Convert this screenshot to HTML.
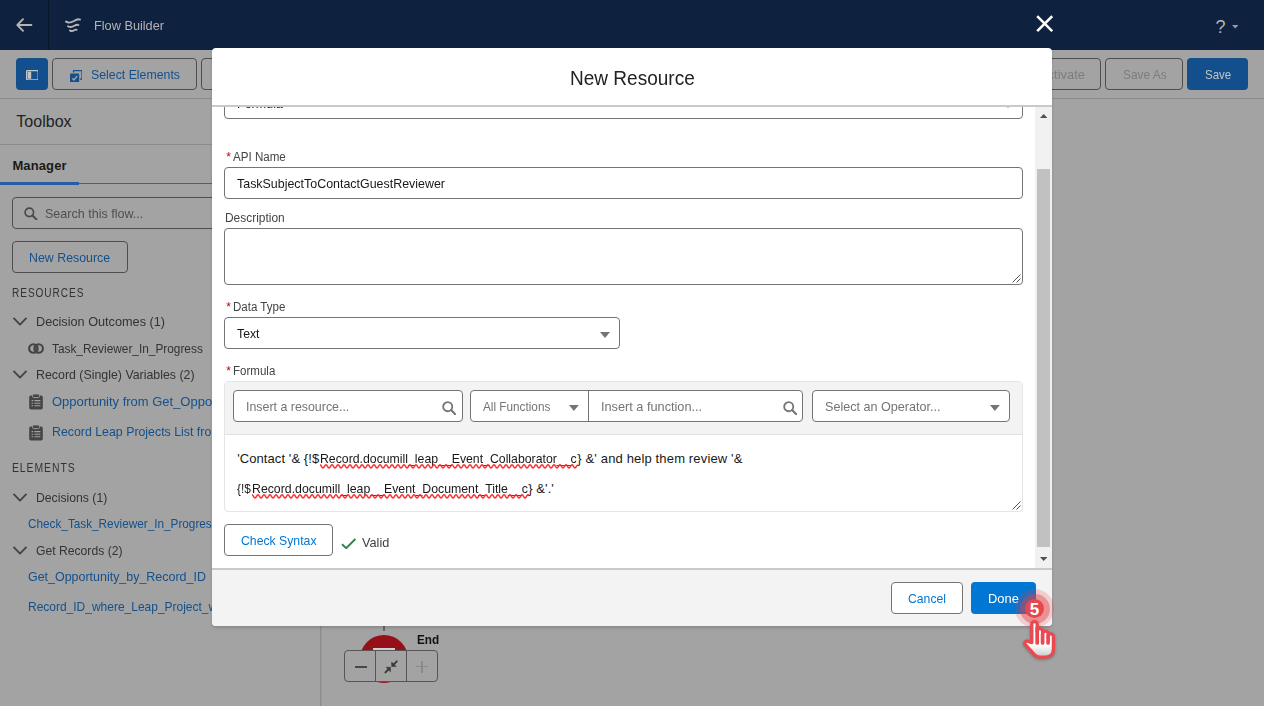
<!DOCTYPE html>
<html><head><meta charset="utf-8"><title>Flow Builder</title>
<style>
html,body{margin:0;padding:0}
body{width:1264px;height:706px;overflow:hidden;position:relative;background:#a3a3a3;font-family:"Liberation Sans",sans-serif;}
.b{position:absolute;box-sizing:border-box;display:block}
.t{position:absolute;white-space:nowrap;line-height:1;font-family:"Liberation Sans",sans-serif;transform-origin:0 0;}
.clip{position:absolute;overflow:hidden}
</style></head><body>

<div class="b" style="left:0px;top:0px;width:1264px;height:50px;background:#0e2240"></div>
<div class="b" style="left:48px;top:0px;width:1px;height:50px;background:#08162b"></div>
<svg class="b" style="left:16px;top:18px;" width="17" height="14" viewBox="0 0 17 14"><path d="M15.4 7H1.6M7 1.2L1.4 7L7 12.8" fill="none" stroke="#b4b4b4" stroke-width="1.9" stroke-linecap="round" stroke-linejoin="round"/></svg>
<svg class="b" style="left:65px;top:16.6px;" width="16" height="16.4" viewBox="0 0 16 16.4"><g fill="none" stroke="#b4b4b4" stroke-width="1.9" stroke-linecap="round"><path d="M1 4.6 C4 6.6 6.4 5.6 9 4 C11.4 2.4 13 1.6 15 2.6"/><path d="M3 9.2 C5.4 10.8 7.4 10 9.4 8.8 C11 7.8 12.2 7.4 13.4 8"/><path d="M5 13.4 C6.6 14.6 8 14 9.2 13.2 C10.2 12.6 10.8 12.4 11.6 12.8"/></g></svg>
<svg class="b" style="left:1035.8px;top:15.3px;" width="17.4" height="17.4" viewBox="0 0 17.4 17.4"><path d="M1.2 1.2L16.2 16.2M16.2 1.2L1.2 16.2" stroke="#ffffff" stroke-width="2.5" stroke-linecap="butt"/></svg>
<svg class="b" style="left:1232px;top:25.2px;" width="6.4" height="3.4" viewBox="0 0 6.4 3.4"><path d="M0 0H6.4L3.2 3.4Z" fill="#9a9a9a"/></svg>
<div class="b" style="left:0px;top:98px;width:1264px;height:1px;background:#8b8b8b"></div>
<div class="b" style="left:16px;top:58px;width:32px;height:32px;background:#134f8c;border-radius:4px"></div>
<svg class="b" style="left:25.6px;top:69.6px;" width="12.8" height="10.4" viewBox="0 0 12.8 10.4"><rect x="0.6" y="0.6" width="11.6" height="9.2" rx="0.8" fill="none" stroke="#c4c4c4" stroke-width="1.2"/><rect x="1.6" y="1.6" width="3.6" height="7.2" fill="#c4c4c4"/></svg>
<div class="b" style="left:52px;top:58px;width:145px;height:32px;border:1px solid #4e4e4e;border-radius:4px"></div>
<svg class="b" style="left:69.6px;top:69.6px;" width="12.6" height="12.6" viewBox="0 0 12.6 12.6"><path d="M3.4 2.6V1.2Q3.4 0.6 4 0.6H11.4Q12 0.6 12 1.2V8.6Q12 9.2 11.4 9.2H10" fill="none" stroke="#14508b" stroke-width="1.2"/><rect x="0" y="3.4" width="9.2" height="9.2" rx="1" fill="#14508b"/><path d="M2.2 8.2L4 10L7.2 6" fill="none" stroke="#a3a3a3" stroke-width="1.3"/></svg>
<div class="b" style="left:201px;top:58px;width:60px;height:32px;border:1px solid #4e4e4e;border-radius:4px"></div>
<div class="b" style="left:1022px;top:58px;width:79px;height:32px;border:1px solid #4e4e4e;border-radius:4px"></div>
<div class="b" style="left:1105px;top:58px;width:78px;height:32px;border:1px solid #4e4e4e;border-radius:4px"></div>
<div class="b" style="left:1187px;top:58px;width:61px;height:32px;background:#134f8c;border-radius:4px"></div>
<div class="b" style="left:320px;top:99px;width:1px;height:607px;background:#8b8b8b"></div>
<div class="b" style="left:321px;top:99px;width:1px;height:607px;background:#9b9b9b"></div>
<div class="b" style="left:0px;top:144px;width:320px;height:1px;background:#8b8b8b"></div>
<div class="b" style="left:0px;top:183px;width:320px;height:1px;background:#5e5e5e"></div>
<div class="b" style="left:0px;top:181.6px;width:79px;height:3px;background:#2a5ba3"></div>
<div class="b" style="left:12px;top:197px;width:300px;height:32px;border:1px solid #4e4e4e;border-radius:4px"></div>
<svg class="b" style="left:24.2px;top:206.6px;" width="13.4" height="13.4" viewBox="0 0 13.6 13.6"><circle cx="5.4" cy="5.4" r="4.3" fill="none" stroke="#4a4a4a" stroke-width="1.7"/><path d="M8.6 8.6 L12.6 12.6" stroke="#4a4a4a" stroke-width="2" stroke-linecap="round"/></svg>
<div class="b" style="left:12px;top:241px;width:116px;height:32px;border:1px solid #4e4e4e;border-radius:4px"></div>
<svg class="b" style="left:13.2px;top:317.4px;" width="14" height="9" viewBox="0 0 14 9"><path d="M1 1.4 L7 7.6 L13 1.4" fill="none" stroke="#444" stroke-width="1.9" stroke-linecap="round" stroke-linejoin="round"/></svg>
<svg class="b" style="left:28px;top:343.4px;" width="16" height="11" viewBox="0 0 16 11"><circle cx="5.4" cy="5.5" r="4.3" fill="none" stroke="#444" stroke-width="2.1"/><circle cx="10.6" cy="5.5" r="4.3" fill="none" stroke="#444" stroke-width="2.1"/><path d="M8 1.9 A4.5 4.5 0 0 1 8 9.1 A4.5 4.5 0 0 1 8 1.9Z" fill="#444" opacity="0.75"/></svg>
<svg class="b" style="left:13.2px;top:370.4px;" width="14" height="9" viewBox="0 0 14 9"><path d="M1 1.4 L7 7.6 L13 1.4" fill="none" stroke="#444" stroke-width="1.9" stroke-linecap="round" stroke-linejoin="round"/></svg>
<svg class="b" style="left:29px;top:394.4px;" width="14" height="15.6" viewBox="0 0 14 15.6"><rect x="0.2" y="1.6" width="13.6" height="13.8" rx="1.6" fill="#444"/><rect x="3.6" y="0" width="6.8" height="3.6" rx="1" fill="#444" stroke="#a3a3a3" stroke-width="0.9"/><g stroke="#a3a3a3" stroke-width="1.1"><path d="M2.6 6.6h1.6M5.4 6.6h6M2.6 9.2h1.6M5.4 9.2h6M2.6 11.8h1.6M5.4 11.8h6"/></g></svg>
<svg class="b" style="left:29px;top:425.4px;" width="14" height="15.6" viewBox="0 0 14 15.6"><rect x="0.2" y="1.6" width="13.6" height="13.8" rx="1.6" fill="#444"/><rect x="3.6" y="0" width="6.8" height="3.6" rx="1" fill="#444" stroke="#a3a3a3" stroke-width="0.9"/><g stroke="#a3a3a3" stroke-width="1.1"><path d="M2.6 6.6h1.6M5.4 6.6h6M2.6 9.2h1.6M5.4 9.2h6M2.6 11.8h1.6M5.4 11.8h6"/></g></svg>
<svg class="b" style="left:13.2px;top:493.4px;" width="14" height="9" viewBox="0 0 14 9"><path d="M1 1.4 L7 7.6 L13 1.4" fill="none" stroke="#444" stroke-width="1.9" stroke-linecap="round" stroke-linejoin="round"/></svg>
<svg class="b" style="left:13.2px;top:546.4px;" width="14" height="9" viewBox="0 0 14 9"><path d="M1 1.4 L7 7.6 L13 1.4" fill="none" stroke="#444" stroke-width="1.9" stroke-linecap="round" stroke-linejoin="round"/></svg>
<div class="b" style="left:383px;top:626px;width:2px;height:5px;background:#666"></div>
<div class="b" style="left:360.2px;top:635px;width:48px;height:48px;background:#96101a;border-radius:50%"></div>
<div class="b" style="left:373px;top:648px;width:22.4px;height:8px;background:#cfcfcf"></div>
<div class="b" style="left:344px;top:650px;width:94px;height:32px;background:#a3a3a3;border:1px solid #555;border-radius:4px"></div>
<div class="b" style="left:375px;top:650px;width:1px;height:32px;background:#555"></div>
<div class="b" style="left:406px;top:650px;width:1px;height:32px;background:#555"></div>
<div class="b" style="left:354.6px;top:666px;width:12.8px;height:1.8px;background:#484848"></div>
<svg class="b" style="left:383px;top:659px;" width="16" height="16" viewBox="383 659 16 16"><g fill="#3c3c3c" stroke="#3c3c3c"><path d="M391.7 666.5V662.1L396.1 666.5Z" stroke-width="0.6" stroke-linejoin="round"/><path d="M393.6 664.6L396.8 661.4" stroke-width="2" stroke-linecap="round" fill="none"/><path d="M390.5 667.3H386.1L390.5 671.7Z" stroke-width="0.6" stroke-linejoin="round"/><path d="M388.6 669.2L385.4 672.4" stroke-width="2" stroke-linecap="round" fill="none"/></g></svg>
<div class="b" style="left:415.8px;top:665.7px;width:12px;height:1.8px;background:#8a8a8a"></div>
<div class="b" style="left:420.9px;top:660.6px;width:1.8px;height:12px;background:#8a8a8a"></div>
<div class="t" id="flow" style="left:93.60px;top:19.00px;font-size:13px;color:#b4b4b4;transform:scaleX(0.9786);">Flow Builder</div>
<div class="t" id="help" style="left:1215.40px;top:18.06px;font-size:18px;color:#b4b4b4;">?</div>
<div class="t" id="selel" style="left:91.30px;top:67.80px;font-size:13px;color:#14508b;transform:scaleX(0.9474);">Select Elements</div>
<div class="t" id="activate" style="left:1039.10px;top:67.80px;font-size:13px;color:#7d7d7d;transform:scaleX(0.9946);">Activate</div>
<div class="t" id="saveas" style="left:1122.70px;top:67.80px;font-size:13px;color:#7d7d7d;transform:scaleX(0.9161);">Save As</div>
<div class="t" id="save" style="left:1204.80px;top:67.80px;font-size:13px;color:#c4c4c4;transform:scaleX(0.8839);">Save</div>
<div class="t" id="toolbox" style="left:16.30px;top:113.76px;font-size:16px;color:#222222;letter-spacing:0.024px;">Toolbox</div>
<div class="t" id="manager" style="left:12.40px;top:159.00px;font-size:13px;color:#1a1a1a;font-weight:700;letter-spacing:0.122px;">Manager</div>
<div class="t" id="search" style="left:45.00px;top:206.60px;font-size:13px;color:#4f4f4f;transform:scaleX(0.9648);">Search this flow...</div>
<div class="t" id="newres" style="left:29.30px;top:250.80px;font-size:13px;color:#14508b;transform:scaleX(0.9523);">New Resource</div>
<div class="t" id="resources" style="left:12.40px;top:286.84px;font-size:12px;color:#333333;letter-spacing:1.100px;transform:scaleX(0.8418);">RESOURCES</div>
<div class="t" id="decout" style="left:36.20px;top:315.10px;font-size:13px;color:#333333;transform:scaleX(0.9757);">Decision Outcomes (1)</div>
<div class="t" id="taskrev" style="left:52.40px;top:341.80px;font-size:13px;color:#333333;transform:scaleX(0.9114);">Task_Reviewer_In_Progress</div>
<div class="t" id="recvar" style="left:36.00px;top:367.80px;font-size:13px;color:#333333;transform:scaleX(0.9516);">Record (Single) Variables (2)</div>
<div class="t" id="elements" style="left:12.40px;top:461.84px;font-size:12px;color:#333333;letter-spacing:1.100px;transform:scaleX(0.8648);">ELEMENTS</div>
<div class="t" id="decisions" style="left:35.90px;top:491.00px;font-size:13px;color:#333333;transform:scaleX(0.9399);">Decisions (1)</div>
<div class="t" id="getrec" style="left:36.10px;top:543.90px;font-size:13px;color:#333333;transform:scaleX(0.9353);">Get Records (2)</div>
<div class="t" id="getopp" style="left:28.10px;top:570.00px;font-size:13px;color:#14508b;transform:scaleX(0.9579);">Get_Opportunity_by_Record_ID</div>
<div class="t" id="end" style="left:416.80px;top:632.60px;font-size:13px;color:#111111;font-weight:700;transform:scaleX(0.9038);">End</div>
<div class="clip" style="left:0;top:380px;width:320px;height:250px">
<div class="t" id="oppfrom" style="left:52.40px;top:14.80px;font-size:13px;color:#14508b;transform:scaleX(0.9980);">Opportunity from Get_Opportunity_by_Record_ID</div>
<div class="t" id="recleap" style="left:52.40px;top:45.10px;font-size:13px;color:#14508b;transform:scaleX(0.9500);">Record Leap Projects List from Record_ID_where</div>
<div class="t" id="checktask" style="left:28.10px;top:136.90px;font-size:13px;color:#14508b;transform:scaleX(0.9050);">Check_Task_Reviewer_In_Progress</div>
<div class="t" id="recid" style="left:28.10px;top:220.00px;font-size:13px;color:#14508b;transform:scaleX(0.9216);">Record_ID_where_Leap_Project_was_shared</div>
</div>
<div class="b" style="left:212px;top:48px;width:840px;height:577.5px;background:#ffffff;border-radius:4px;box-shadow:0 2px 3px rgba(0,0,0,0.16)"></div>
<div class="clip" style="left:212px;top:107px;width:823px;height:461px">
<div class="b" style="left:12px;top:-20px;width:799px;height:32px;border:1px solid #747474;border-radius:4px;background:#fff"></div>
<svg class="b" style="left:791px;top:-5px;" width="10" height="6" viewBox="0 0 10 6"><path d="M0 0H10L5.0 6Z" fill="#747474"/></svg>
</div>
<div class="b" style="left:212px;top:105px;width:840px;height:2px;background:#c9c9c9"></div>
<div class="b" style="left:212px;top:568px;width:840px;height:57.5px;background:#f3f3f3;border-top:2px solid #c9c9c9;border-radius:0 0 4px 4px"></div>
<div class="b" style="left:224px;top:167px;width:799px;height:32px;border:1px solid #747474;border-radius:4px;background:#fff"></div>
<div class="b" style="left:224px;top:228px;width:799px;height:57px;border:1px solid #747474;border-radius:4px;background:#fff"></div>
<div class="b" style="left:224px;top:317px;width:396px;height:32px;border:1px solid #747474;border-radius:4px;background:#fff"></div>
<svg class="b" style="left:600px;top:332px;" width="10" height="6" viewBox="0 0 10 6"><path d="M0 0H10L5.0 6Z" fill="#747474"/></svg>
<div class="b" style="left:224px;top:381px;width:799px;height:131px;border:1px solid #e5e5e5;border-radius:4px;background:#fff"></div>
<div class="b" style="left:225px;top:382px;width:797px;height:52px;background:#f3f3f3;border-radius:3px 3px 0 0"></div>
<div class="b" style="left:225px;top:434px;width:797px;height:1px;background:#e0e0e0"></div>
<div class="b" style="left:233px;top:390px;width:230px;height:32px;border:1px solid #747474;border-radius:4px;background:#fff"></div>
<svg class="b" style="left:441.6px;top:400.8px;" width="14.4" height="14.4" viewBox="0 0 13.6 13.6"><circle cx="5.4" cy="5.4" r="4.3" fill="none" stroke="#747474" stroke-width="1.7"/><path d="M8.6 8.6 L12.6 12.6" stroke="#747474" stroke-width="2" stroke-linecap="round"/></svg>
<div class="b" style="left:470px;top:390px;width:333px;height:32px;border:1px solid #747474;border-radius:4px;background:#fff"></div>
<div class="b" style="left:588px;top:391px;width:1px;height:30px;background:#747474"></div>
<svg class="b" style="left:569.4px;top:404.8px;" width="9.8" height="6" viewBox="0 0 9.8 6"><path d="M0 0H9.8L4.9 6Z" fill="#747474"/></svg>
<svg class="b" style="left:782.6px;top:400.8px;" width="14.4" height="14.4" viewBox="0 0 13.6 13.6"><circle cx="5.4" cy="5.4" r="4.3" fill="none" stroke="#747474" stroke-width="1.7"/><path d="M8.6 8.6 L12.6 12.6" stroke="#747474" stroke-width="2" stroke-linecap="round"/></svg>
<div class="b" style="left:812px;top:390px;width:198px;height:32px;border:1px solid #747474;border-radius:4px;background:#fff"></div>
<svg class="b" style="left:990.2px;top:404.8px;" width="9.8" height="6" viewBox="0 0 9.8 6"><path d="M0 0H9.8L4.9 6Z" fill="#747474"/></svg>
<svg class="b" style="left:1012.4px;top:274.4px;" width="9" height="9" viewBox="0 0 9 9"><path d="M8.5 0.5L0.5 8.5M8.5 4.5L4.5 8.5" stroke="#555" stroke-width="1"/></svg>
<svg class="b" style="left:1012.4px;top:501.0px;" width="9" height="9" viewBox="0 0 9 9"><path d="M8.5 0.5L0.5 8.5M8.5 4.5L4.5 8.5" stroke="#555" stroke-width="1"/></svg>
<div class="b" style="left:224px;top:524px;width:109px;height:32px;border:1px solid #747474;border-radius:4px;background:#fff"></div>
<svg class="b" style="left:341.4px;top:537.8px;" width="15.4" height="11.6" viewBox="0 0 15.4 11.6"><path d="M1 6.2L5.2 10.2L14.4 1" fill="none" stroke="#2e844a" stroke-width="1.9"/></svg>
<div class="b" style="left:891px;top:582px;width:72px;height:32px;border:1px solid #747474;border-radius:4px;background:#fff"></div>
<div class="b" style="left:971px;top:582px;width:65px;height:32px;background:#0176d3;border-radius:4px"></div>
<div class="b" style="left:1035px;top:107px;width:17px;height:461px;background:#f1f1f1"></div>
<div class="b" style="left:1037px;top:169px;width:13px;height:378px;background:#c1c1c1"></div>
<svg class="b" style="left:1040px;top:114.4px;" width="7.4" height="4" viewBox="0 0 7.4 4"><path d="M0 4H7.4L3.7 0Z" fill="#505050"/></svg>
<svg class="b" style="left:1040px;top:557px;" width="7.4" height="4" viewBox="0 0 7.4 4"><path d="M0 0H7.4L3.7 4Z" fill="#505050"/></svg>
<div class="t" id="title" style="left:569.90px;top:67.97px;font-size:20px;color:#222222;transform:scaleX(0.9514);">New Resource</div>
<div class="t" id="apistar" style="left:226.20px;top:151.24px;font-size:12px;color:#ba0517;">*</div>
<div class="t" id="apiname" style="left:233.00px;top:151.04px;font-size:12px;color:#444444;transform:scaleX(0.9655);">API Name</div>
<div class="t" id="apival" style="left:237.20px;top:177.20px;font-size:13px;color:#181818;transform:scaleX(0.9563);">TaskSubjectToContactGuestReviewer</div>
<div class="t" id="desc" style="left:224.50px;top:212.04px;font-size:12px;color:#444444;transform:scaleX(0.9945);">Description</div>
<div class="t" id="dtstar" style="left:226.20px;top:301.04px;font-size:12px;color:#ba0517;">*</div>
<div class="t" id="datatype" style="left:233.40px;top:300.84px;font-size:12px;color:#444444;transform:scaleX(0.9617);">Data Type</div>
<div class="t" id="textval" style="left:237.20px;top:327.00px;font-size:13px;color:#181818;transform:scaleX(0.9436);">Text</div>
<div class="t" id="fstar" style="left:226.20px;top:365.04px;font-size:12px;color:#ba0517;">*</div>
<div class="t" id="formula" style="left:233.40px;top:364.84px;font-size:12px;color:#444444;transform:scaleX(0.9610);">Formula</div>
<div class="t" id="insres" style="left:246.10px;top:400.10px;font-size:13px;color:#747474;transform:scaleX(0.9530);">Insert a resource...</div>
<div class="t" id="allfn" style="left:482.90px;top:400.94px;font-size:12px;color:#747474;transform:scaleX(0.9796);">All Functions</div>
<div class="t" id="insfn" style="left:601.30px;top:400.10px;font-size:13px;color:#747474;transform:scaleX(0.9783);">Insert a function...</div>
<div class="t" id="selop" style="left:824.80px;top:400.10px;font-size:13px;color:#747474;transform:scaleX(0.9687);">Select an Operator...</div>
<div class="t" id="check" style="left:241.00px;top:534.00px;font-size:13px;color:#0176d3;transform:scaleX(0.9414);">Check Syntax</div>
<div class="t" id="valid" style="left:361.50px;top:536.00px;font-size:13px;color:#3e3e3c;transform:scaleX(0.9766);">Valid</div>
<div class="t" id="cancel" style="left:908.00px;top:592.00px;font-size:13px;color:#0176d3;transform:scaleX(0.9390);">Cancel</div>
<div class="t" id="done" style="left:988.30px;top:591.60px;font-size:13px;color:#ffffff;transform:scaleX(0.9943);">Done</div>
<div class="clip" style="left:212px;top:107px;width:823px;height:20px">
<div class="t" id="formulaclip" style="left:25.30px;top:-9.90px;font-size:13px;color:#181818;transform:scaleX(0.9625);">Formula</div>
</div>
<div class="t" id="f1a" style="left:237.20px;top:451.80px;font-size:13px;color:#181818;letter-spacing:0.083px;">'Contact '&amp; {!$</div>
<div class="t" id="f1b" style="left:319.90px;top:451.80px;font-size:13px;color:#181818;transform:scaleX(0.9444);">Record.documill_leap__Event_Collaborator__c</div>
<div class="t" id="f1c" style="left:577.30px;top:451.80px;font-size:13px;color:#181818;letter-spacing:0.150px;">} &amp;' and help them review '&amp;</div>
<div class="t" id="f2a" style="left:237.20px;top:482.00px;font-size:13px;color:#181818;transform:scaleX(0.9086);">{!$</div>
<div class="t" id="f2b" style="left:251.70px;top:482.00px;font-size:13px;color:#181818;transform:scaleX(0.9462);">Record.documill_leap__Event_Document_Title__c</div>
<div class="t" id="f2c" style="left:528.30px;top:482.00px;font-size:13px;color:#181818;letter-spacing:0.059px;">} &amp;'.'</div>
<svg class="b" style="left:319.6px;top:464.2px;" width="259" height="5" viewBox="0 0 259 5"><path d="M0 0.8 C1.30 0.8 1.70 4.00 3.00 4.00 C4.30 4.0 4.70 0.80 6.00 0.80 C7.30 0.8 7.70 4.00 9.00 4.00 C10.30 4.0 10.70 0.80 12.00 0.80 C13.30 0.8 13.70 4.00 15.00 4.00 C16.30 4.0 16.70 0.80 18.00 0.80 C19.30 0.8 19.70 4.00 21.00 4.00 C22.30 4.0 22.70 0.80 24.00 0.80 C25.30 0.8 25.70 4.00 27.00 4.00 C28.30 4.0 28.70 0.80 30.00 0.80 C31.30 0.8 31.70 4.00 33.00 4.00 C34.30 4.0 34.70 0.80 36.00 0.80 C37.30 0.8 37.70 4.00 39.00 4.00 C40.30 4.0 40.70 0.80 42.00 0.80 C43.30 0.8 43.70 4.00 45.00 4.00 C46.30 4.0 46.70 0.80 48.00 0.80 C49.30 0.8 49.70 4.00 51.00 4.00 C52.30 4.0 52.70 0.80 54.00 0.80 C55.30 0.8 55.70 4.00 57.00 4.00 C58.30 4.0 58.70 0.80 60.00 0.80 C61.30 0.8 61.70 4.00 63.00 4.00 C64.30 4.0 64.70 0.80 66.00 0.80 C67.30 0.8 67.70 4.00 69.00 4.00 C70.30 4.0 70.70 0.80 72.00 0.80 C73.30 0.8 73.70 4.00 75.00 4.00 C76.30 4.0 76.70 0.80 78.00 0.80 C79.30 0.8 79.70 4.00 81.00 4.00 C82.30 4.0 82.70 0.80 84.00 0.80 C85.30 0.8 85.70 4.00 87.00 4.00 C88.30 4.0 88.70 0.80 90.00 0.80 C91.30 0.8 91.70 4.00 93.00 4.00 C94.30 4.0 94.70 0.80 96.00 0.80 C97.30 0.8 97.70 4.00 99.00 4.00 C100.30 4.0 100.70 0.80 102.00 0.80 C103.30 0.8 103.70 4.00 105.00 4.00 C106.30 4.0 106.70 0.80 108.00 0.80 C109.30 0.8 109.70 4.00 111.00 4.00 C112.30 4.0 112.70 0.80 114.00 0.80 C115.30 0.8 115.70 4.00 117.00 4.00 C118.30 4.0 118.70 0.80 120.00 0.80 C121.30 0.8 121.70 4.00 123.00 4.00 C124.30 4.0 124.70 0.80 126.00 0.80 C127.30 0.8 127.70 4.00 129.00 4.00 C130.30 4.0 130.70 0.80 132.00 0.80 C133.30 0.8 133.70 4.00 135.00 4.00 C136.30 4.0 136.70 0.80 138.00 0.80 C139.30 0.8 139.70 4.00 141.00 4.00 C142.30 4.0 142.70 0.80 144.00 0.80 C145.30 0.8 145.70 4.00 147.00 4.00 C148.30 4.0 148.70 0.80 150.00 0.80 C151.30 0.8 151.70 4.00 153.00 4.00 C154.30 4.0 154.70 0.80 156.00 0.80 C157.30 0.8 157.70 4.00 159.00 4.00 C160.30 4.0 160.70 0.80 162.00 0.80 C163.30 0.8 163.70 4.00 165.00 4.00 C166.30 4.0 166.70 0.80 168.00 0.80 C169.30 0.8 169.70 4.00 171.00 4.00 C172.30 4.0 172.70 0.80 174.00 0.80 C175.30 0.8 175.70 4.00 177.00 4.00 C178.30 4.0 178.70 0.80 180.00 0.80 C181.30 0.8 181.70 4.00 183.00 4.00 C184.30 4.0 184.70 0.80 186.00 0.80 C187.30 0.8 187.70 4.00 189.00 4.00 C190.30 4.0 190.70 0.80 192.00 0.80 C193.30 0.8 193.70 4.00 195.00 4.00 C196.30 4.0 196.70 0.80 198.00 0.80 C199.30 0.8 199.70 4.00 201.00 4.00 C202.30 4.0 202.70 0.80 204.00 0.80 C205.30 0.8 205.70 4.00 207.00 4.00 C208.30 4.0 208.70 0.80 210.00 0.80 C211.30 0.8 211.70 4.00 213.00 4.00 C214.30 4.0 214.70 0.80 216.00 0.80 C217.30 0.8 217.70 4.00 219.00 4.00 C220.30 4.0 220.70 0.80 222.00 0.80 C223.30 0.8 223.70 4.00 225.00 4.00 C226.30 4.0 226.70 0.80 228.00 0.80 C229.30 0.8 229.70 4.00 231.00 4.00 C232.30 4.0 232.70 0.80 234.00 0.80 C235.30 0.8 235.70 4.00 237.00 4.00 C238.30 4.0 238.70 0.80 240.00 0.80 C241.30 0.8 241.70 4.00 243.00 4.00 C244.30 4.0 244.70 0.80 246.00 0.80 C247.30 0.8 247.70 4.00 249.00 4.00 C250.30 4.0 250.70 0.80 252.00 0.80 C253.30 0.8 253.70 4.00 255.00 4.00 C256.30 4.0 256.30 1.23 257.60 1.23" fill="none" stroke="#ff2626" stroke-width="1.45" stroke-linecap="round"/></svg>
<svg class="b" style="left:251.6px;top:494.4px;" width="278" height="5" viewBox="0 0 278 5"><path d="M0 0.8 C1.30 0.8 1.70 4.00 3.00 4.00 C4.30 4.0 4.70 0.80 6.00 0.80 C7.30 0.8 7.70 4.00 9.00 4.00 C10.30 4.0 10.70 0.80 12.00 0.80 C13.30 0.8 13.70 4.00 15.00 4.00 C16.30 4.0 16.70 0.80 18.00 0.80 C19.30 0.8 19.70 4.00 21.00 4.00 C22.30 4.0 22.70 0.80 24.00 0.80 C25.30 0.8 25.70 4.00 27.00 4.00 C28.30 4.0 28.70 0.80 30.00 0.80 C31.30 0.8 31.70 4.00 33.00 4.00 C34.30 4.0 34.70 0.80 36.00 0.80 C37.30 0.8 37.70 4.00 39.00 4.00 C40.30 4.0 40.70 0.80 42.00 0.80 C43.30 0.8 43.70 4.00 45.00 4.00 C46.30 4.0 46.70 0.80 48.00 0.80 C49.30 0.8 49.70 4.00 51.00 4.00 C52.30 4.0 52.70 0.80 54.00 0.80 C55.30 0.8 55.70 4.00 57.00 4.00 C58.30 4.0 58.70 0.80 60.00 0.80 C61.30 0.8 61.70 4.00 63.00 4.00 C64.30 4.0 64.70 0.80 66.00 0.80 C67.30 0.8 67.70 4.00 69.00 4.00 C70.30 4.0 70.70 0.80 72.00 0.80 C73.30 0.8 73.70 4.00 75.00 4.00 C76.30 4.0 76.70 0.80 78.00 0.80 C79.30 0.8 79.70 4.00 81.00 4.00 C82.30 4.0 82.70 0.80 84.00 0.80 C85.30 0.8 85.70 4.00 87.00 4.00 C88.30 4.0 88.70 0.80 90.00 0.80 C91.30 0.8 91.70 4.00 93.00 4.00 C94.30 4.0 94.70 0.80 96.00 0.80 C97.30 0.8 97.70 4.00 99.00 4.00 C100.30 4.0 100.70 0.80 102.00 0.80 C103.30 0.8 103.70 4.00 105.00 4.00 C106.30 4.0 106.70 0.80 108.00 0.80 C109.30 0.8 109.70 4.00 111.00 4.00 C112.30 4.0 112.70 0.80 114.00 0.80 C115.30 0.8 115.70 4.00 117.00 4.00 C118.30 4.0 118.70 0.80 120.00 0.80 C121.30 0.8 121.70 4.00 123.00 4.00 C124.30 4.0 124.70 0.80 126.00 0.80 C127.30 0.8 127.70 4.00 129.00 4.00 C130.30 4.0 130.70 0.80 132.00 0.80 C133.30 0.8 133.70 4.00 135.00 4.00 C136.30 4.0 136.70 0.80 138.00 0.80 C139.30 0.8 139.70 4.00 141.00 4.00 C142.30 4.0 142.70 0.80 144.00 0.80 C145.30 0.8 145.70 4.00 147.00 4.00 C148.30 4.0 148.70 0.80 150.00 0.80 C151.30 0.8 151.70 4.00 153.00 4.00 C154.30 4.0 154.70 0.80 156.00 0.80 C157.30 0.8 157.70 4.00 159.00 4.00 C160.30 4.0 160.70 0.80 162.00 0.80 C163.30 0.8 163.70 4.00 165.00 4.00 C166.30 4.0 166.70 0.80 168.00 0.80 C169.30 0.8 169.70 4.00 171.00 4.00 C172.30 4.0 172.70 0.80 174.00 0.80 C175.30 0.8 175.70 4.00 177.00 4.00 C178.30 4.0 178.70 0.80 180.00 0.80 C181.30 0.8 181.70 4.00 183.00 4.00 C184.30 4.0 184.70 0.80 186.00 0.80 C187.30 0.8 187.70 4.00 189.00 4.00 C190.30 4.0 190.70 0.80 192.00 0.80 C193.30 0.8 193.70 4.00 195.00 4.00 C196.30 4.0 196.70 0.80 198.00 0.80 C199.30 0.8 199.70 4.00 201.00 4.00 C202.30 4.0 202.70 0.80 204.00 0.80 C205.30 0.8 205.70 4.00 207.00 4.00 C208.30 4.0 208.70 0.80 210.00 0.80 C211.30 0.8 211.70 4.00 213.00 4.00 C214.30 4.0 214.70 0.80 216.00 0.80 C217.30 0.8 217.70 4.00 219.00 4.00 C220.30 4.0 220.70 0.80 222.00 0.80 C223.30 0.8 223.70 4.00 225.00 4.00 C226.30 4.0 226.70 0.80 228.00 0.80 C229.30 0.8 229.70 4.00 231.00 4.00 C232.30 4.0 232.70 0.80 234.00 0.80 C235.30 0.8 235.70 4.00 237.00 4.00 C238.30 4.0 238.70 0.80 240.00 0.80 C241.30 0.8 241.70 4.00 243.00 4.00 C244.30 4.0 244.70 0.80 246.00 0.80 C247.30 0.8 247.70 4.00 249.00 4.00 C250.30 4.0 250.70 0.80 252.00 0.80 C253.30 0.8 253.70 4.00 255.00 4.00 C256.30 4.0 256.70 0.80 258.00 0.80 C259.30 0.8 259.70 4.00 261.00 4.00 C262.30 4.0 262.70 0.80 264.00 0.80 C265.30 0.8 265.70 4.00 267.00 4.00 C268.30 4.0 268.70 0.80 270.00 0.80 C271.30 0.8 271.70 4.00 273.00 4.00 C274.30 4.0 274.70 0.80 276.00 0.80 C277.30 0.8 275.30 1.44 276.60 1.44" fill="none" stroke="#ff2626" stroke-width="1.45" stroke-linecap="round"/></svg>
<div class="b" style="left:1015.0999999999999px;top:589.1px;width:39px;height:39px;background:rgba(229,62,66,0.20);border-radius:50%"></div>
<div class="b" style="left:1019.5999999999999px;top:593.6px;width:30px;height:30px;background:rgba(229,62,66,0.42);border-radius:50%"></div>
<div class="b" style="left:1024.6999999999998px;top:598.7px;width:19.8px;height:19.8px;background:#e4474c;border-radius:50%"></div>
<div class="t" id="five" style="left:1029.8px;top:600.5px;font-size:17px;font-weight:700;color:#fff">5</div>
<svg class="b" style="left:1015px;top:612px;filter:drop-shadow(0 1.5px 1.5px rgba(0,0,0,0.3))" width="48" height="54" viewBox="1015 612 48 54"><defs><linearGradient id="hg" gradientUnits="userSpaceOnUse" x1="0" y1="620" x2="0" y2="657"><stop offset="0.68" stop-color="#ffffff"/><stop offset="1" stop-color="#c8c8c8"/></linearGradient></defs><path d="M1031.8 642.6 V624.3 a2.7 2.7 0 0 1 5.4 0 V631.4 a2.7 2.7 0 0 1 5.4 0 V633.8 a2.75 2.75 0 0 1 5.5 0 V636.5 a2.65 2.65 0 0 1 5.3 0 V649 C1053.4 654.5 1050 657.1 1045.5 657.1 H1040 C1037.5 657.1 1036 656.4 1034.4 654.6 L1025.4 644.6 C1023.8 642.6 1025.6 640.6 1027.6 641.2 Z" fill="url(#hg)" stroke="#e9494f" stroke-width="3.3" stroke-linejoin="round"/><path d="M1037.2 628V643M1042.6 634V643M1048.1 636.4V643" fill="none" stroke="#e9494f" stroke-width="3.7" stroke-linecap="round"/></svg>

</body></html>
